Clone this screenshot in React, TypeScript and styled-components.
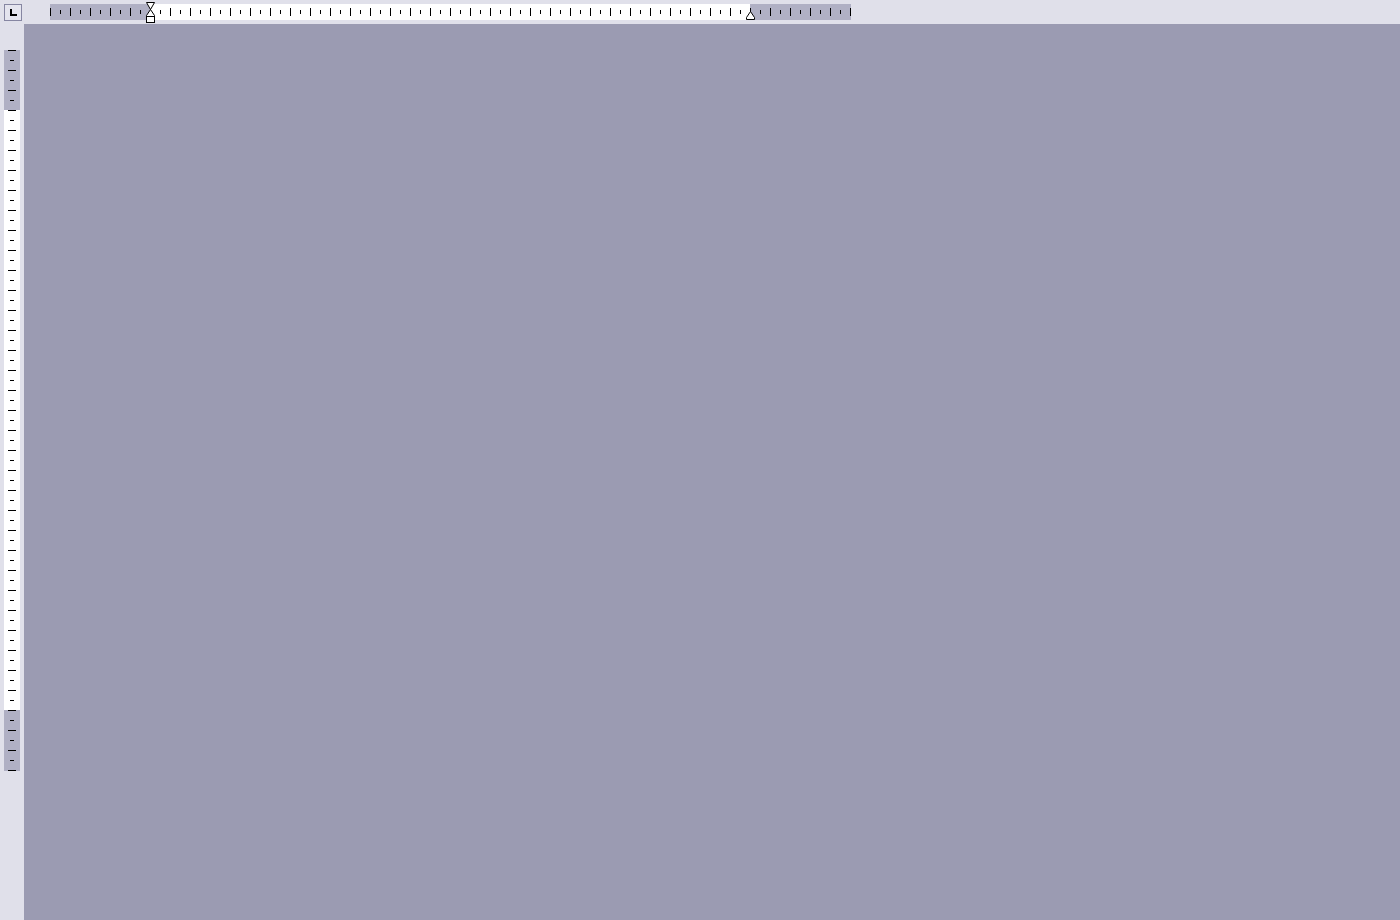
import React from "react";
import styled, { createGlobalStyle } from "styled-components";

const Global = createGlobalStyle`
  html, body { margin: 0; padding: 0; height: 100%; overflow: hidden; }
  body { font-family: "Liberation Sans", Arial, sans-serif; background: #e0e0ea; }
  #root { height: 100%; }
`;

const Shell = styled.div`
  display: grid;
  grid-template-columns: 24px 1fr;
  grid-template-rows: 24px 1fr;
  width: 1400px;
  height: 920px;
  background: #e0e0ea;
`;

const Corner = styled.div`
  display: flex;
  align-items: flex-start;
  padding: 4px 0 0 4px;
`;

const TabButton = styled.div`
  width: 18px;
  height: 17px;
  box-sizing: border-box;
  border: 1px solid #8686a2;
  background: #e4e4ee;
  display: flex;
  align-items: center;
  justify-content: center;
`;

const TopBar = styled.div`
  display: flex;
  align-items: flex-start;
  padding: 4px 0 0 26px;
`;

const LeftBar = styled.div`
  display: flex;
  flex-direction: column;
  padding: 26px 0 0 4px;
`;

const HRuler = styled.div`
  position: relative;
  display: flex;
  width: 801px;
  height: 16px;
`;

const VRuler = styled.div`
  position: relative;
  display: flex;
  flex-direction: column;
  width: 16px;
  height: 721px;
`;

const Margin = styled.div<{ $size: number }>`
  flex: 0 0 ${(p) => p.$size}px;
  background: #b0b0c4;
`;

const Body = styled.div`
  flex: 1 1 auto;
  background: #ffffff;
`;

const Overlay = styled.svg`
  position: absolute;
  left: 0;
  top: 0;
  overflow: visible;
`;

const Marker = styled.svg<{ $x: number; $y: number }>`
  position: absolute;
  left: ${(p) => p.$x}px;
  top: ${(p) => p.$y}px;
  overflow: visible;
`;

const Page = styled.div`
  background: #9b9bb2;
`;

const hTicks = Array.from({ length: 81 }, (_, i) => i);
const vTicks = Array.from({ length: 73 }, (_, i) => i);

export default function App() {
  return (
    <>
      <Global />
      <Shell>
        <Corner>
          <TabButton>
            <svg width="7" height="7" viewBox="0 0 7 7">
              <path d="M1 0 V6 H7" fill="none" stroke="#000" strokeWidth="2" />
            </svg>
          </TabButton>
        </Corner>
        <TopBar>
          <HRuler>
            <Margin $size={100} />
            <Body />
            <Margin $size={101} />
            <Overlay width="801" height="16">
              {hTicks.map((i) => {
                const x = i * 10 + 0.5;
                const long = i % 2 === 0;
                return (
                  <line
                    key={i}
                    x1={x}
                    x2={x}
                    y1={long ? 4 : 6}
                    y2={long ? 12 : 10}
                    stroke="#000"
                    strokeWidth="1"
                  />
                );
              })}
            </Overlay>
            <Marker $x={95} $y={-4} width="11" height="26" viewBox="0 0 11 26">
              <path d="M1.5 2.5 H9.5 L5.5 9.5 Z" fill="#fff" stroke="#000" />
              <path d="M5.5 9.5 L9.5 15.5 V16.5 H1.5 V15.5 Z" fill="#fff" stroke="#000" />
              <rect x="1.5" y="16.5" width="8" height="6" fill="#fff" stroke="#000" />
            </Marker>
            <Marker $x={695} $y={5} width="11" height="12" viewBox="0 0 11 12">
              <path d="M5.5 2.5 L9.5 8.5 V10.5 H1.5 V8.5 Z" fill="#fff" stroke="#000" />
            </Marker>
          </HRuler>
        </TopBar>
        <LeftBar>
          <VRuler>
            <Margin $size={60} />
            <Body />
            <Margin $size={61} />
            <Overlay width="16" height="721">
              {vTicks.map((i) => {
                const y = i * 10 + 0.5;
                const long = i % 2 === 0;
                return (
                  <line
                    key={i}
                    y1={y}
                    y2={y}
                    x1={long ? 4 : 6}
                    x2={long ? 12 : 10}
                    stroke="#000"
                    strokeWidth="1"
                  />
                );
              })}
            </Overlay>
          </VRuler>
        </LeftBar>
        <Page />
      </Shell>
    </>
  );
}
